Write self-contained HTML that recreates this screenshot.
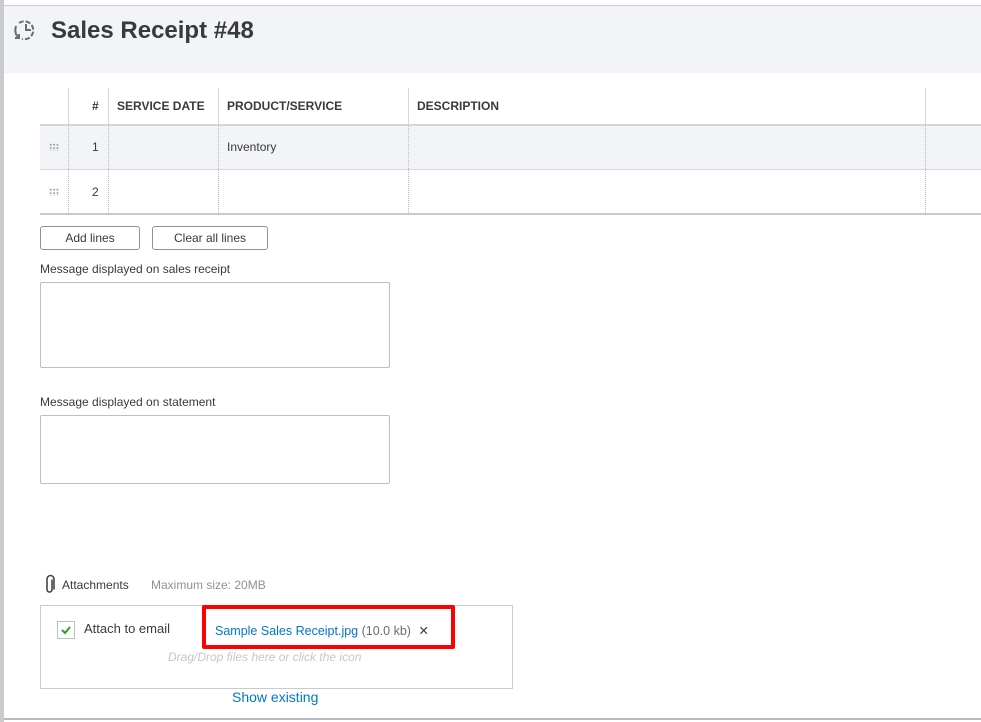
<!DOCTYPE html>
<html><head><meta charset="utf-8"><style>
*{box-sizing:border-box;margin:0;padding:0}
body{width:981px;height:722px;background:#fff;font-family:"Liberation Sans",sans-serif;color:#393a3d;position:relative;overflow:hidden}
.abs{position:absolute}
.vl{position:absolute;width:0;border-left:1px dotted #b8babe}
.hdr{font-size:12px;font-weight:bold;color:#393a3d;top:99px}
.lbl{font-size:12px;color:#393a3d}
.btn{position:absolute;border:1px solid #8d9096;border-radius:3px;background:#fff;font-size:12px;text-align:center;line-height:22px;height:24px;color:#393a3d}
.box{position:absolute;border:1px solid #babec5;border-radius:2px}
.grip{position:absolute;left:49px;width:10px;height:8px;background-image:radial-gradient(circle,#999 0.9px,transparent 1.1px);background-size:3.4px 3.4px}
</style></head><body>
<div class="abs" style="left:0;top:0;width:4px;height:722px;background:#c9cbcf"></div>
<div class="abs" style="left:4px;top:5px;width:977px;height:1px;background:#c9cbcf"></div>
<div class="abs" style="left:4px;top:6px;width:977px;height:67px;background:#f3f4f7"></div>
<svg class="abs" style="left:11px;top:17px" width="28" height="26" viewBox="0 0 28 26">
<path d="M8 6 A9 9 0 1 1 11 22" fill="none" stroke="#6b6c72" stroke-width="2" stroke-dasharray="5 2"/>
<path d="M15 7 V13 H20" fill="none" stroke="#6b6c72" stroke-width="2"/>
<path d="M5 9 Q3 16 7 20 M4 21 L8 21 L8 17" fill="none" stroke="#6b6c72" stroke-width="2"/>
</svg>
<div class="abs" style="left:51px;top:17px;font-size:24px;font-weight:bold;color:#393a3d">Sales Receipt #48</div>

<div class="abs" style="left:40px;top:124px;width:941px;height:2px;background:#d4d6d9"></div>
<div class="abs" style="left:40px;top:126px;width:941px;height:43px;background:#f3f4f7"></div>
<div class="abs" style="left:40px;top:169px;width:941px;height:1px;background:#d4d6d9"></div>
<div class="abs" style="left:40px;top:213px;width:941px;height:2px;background:#c8cacd"></div>
<div class="abs" style="left:68px;top:88px;height:36px;width:1px;background:#d4d6d9"></div>
<div class="abs" style="left:108px;top:88px;height:36px;width:1px;background:#d4d6d9"></div>
<div class="abs" style="left:218px;top:88px;height:36px;width:1px;background:#d4d6d9"></div>
<div class="abs" style="left:408px;top:88px;height:36px;width:1px;background:#d4d6d9"></div>
<div class="abs" style="left:925px;top:88px;height:36px;width:1px;background:#d4d6d9"></div>
<div class="vl" style="left:68px;top:126px;height:87px"></div>
<div class="vl" style="left:108px;top:126px;height:87px"></div>
<div class="vl" style="left:218px;top:126px;height:87px"></div>
<div class="vl" style="left:408px;top:126px;height:87px"></div>
<div class="vl" style="left:925px;top:126px;height:87px"></div>
<div class="abs hdr" style="left:92px">#</div>
<div class="abs hdr" style="left:117px">SERVICE DATE</div>
<div class="abs hdr" style="left:227px">PRODUCT/SERVICE</div>
<div class="abs hdr" style="left:417px">DESCRIPTION</div>
<div class="grip" style="top:143px"></div>
<div class="grip" style="top:188px"></div>
<div class="abs lbl" style="left:92px;top:140px">1</div>
<div class="abs lbl" style="left:92px;top:185px">2</div>
<div class="abs lbl" style="left:227px;top:140px">Inventory</div>

<div class="btn" style="left:40px;top:226px;width:100px">Add lines</div>
<div class="btn" style="left:152px;top:226px;width:116px">Clear all lines</div>

<div class="abs lbl" style="left:40px;top:262px">Message displayed on sales receipt</div>
<div class="box" style="left:40px;top:282px;width:350px;height:86px"></div>
<div class="abs lbl" style="left:40px;top:395px">Message displayed on statement</div>
<div class="box" style="left:40px;top:415px;width:350px;height:69px"></div>

<svg class="abs" style="left:44px;top:574px" width="14" height="20" viewBox="0 0 14 20"><path d="M9 5 V15 A2.5 2.5 0 0 1 4 15 V4.5 A3.5 3.5 0 0 1 11 4.5 V15" fill="none" stroke="#444" stroke-width="1.6" transform="translate(-1,0.5)"/></svg>
<div class="abs lbl" style="left:62px;top:578px">Attachments</div>
<div class="abs" style="left:151px;top:578px;font-size:12px;color:#8d9096">Maximum size: 20MB</div>
<div class="abs" style="left:40px;top:605px;width:473px;height:84px;border:1px solid #c9cbcf"></div>
<div class="abs" style="left:57px;top:621px;width:18px;height:18px;border:1px solid #babec5;background:#fff"></div>
<svg class="abs" style="left:59px;top:623px" width="14" height="14" viewBox="0 0 14 14"><path d="M3 7 L6 10 L11 4" fill="none" stroke="#2ca01c" stroke-width="2"/></svg>
<div class="abs" style="left:84px;top:621px;font-size:13px;color:#393a3d">Attach to email</div>
<div class="abs" style="left:202px;top:605px;width:253px;height:44px;border:4px solid #f00;border-radius:2px"></div>
<div class="abs" style="left:215px;top:623px;font-size:12.5px;color:#0077c5">Sample Sales Receipt.jpg <span style="color:#6b6c72">(10.0 kb)</span> <span style="color:#393a3d;margin-left:4px">✕</span></div>
<div class="abs" style="left:168px;top:650px;font-size:12px;font-style:italic;color:#c4c6ca">Drag/Drop files here or click the icon</div>
<div class="abs" style="left:232px;top:689px;font-size:14px;color:#0077c5">Show existing</div>
<div class="abs" style="left:4px;top:718px;width:977px;height:2px;background:#b8babe"></div>
</body></html>
